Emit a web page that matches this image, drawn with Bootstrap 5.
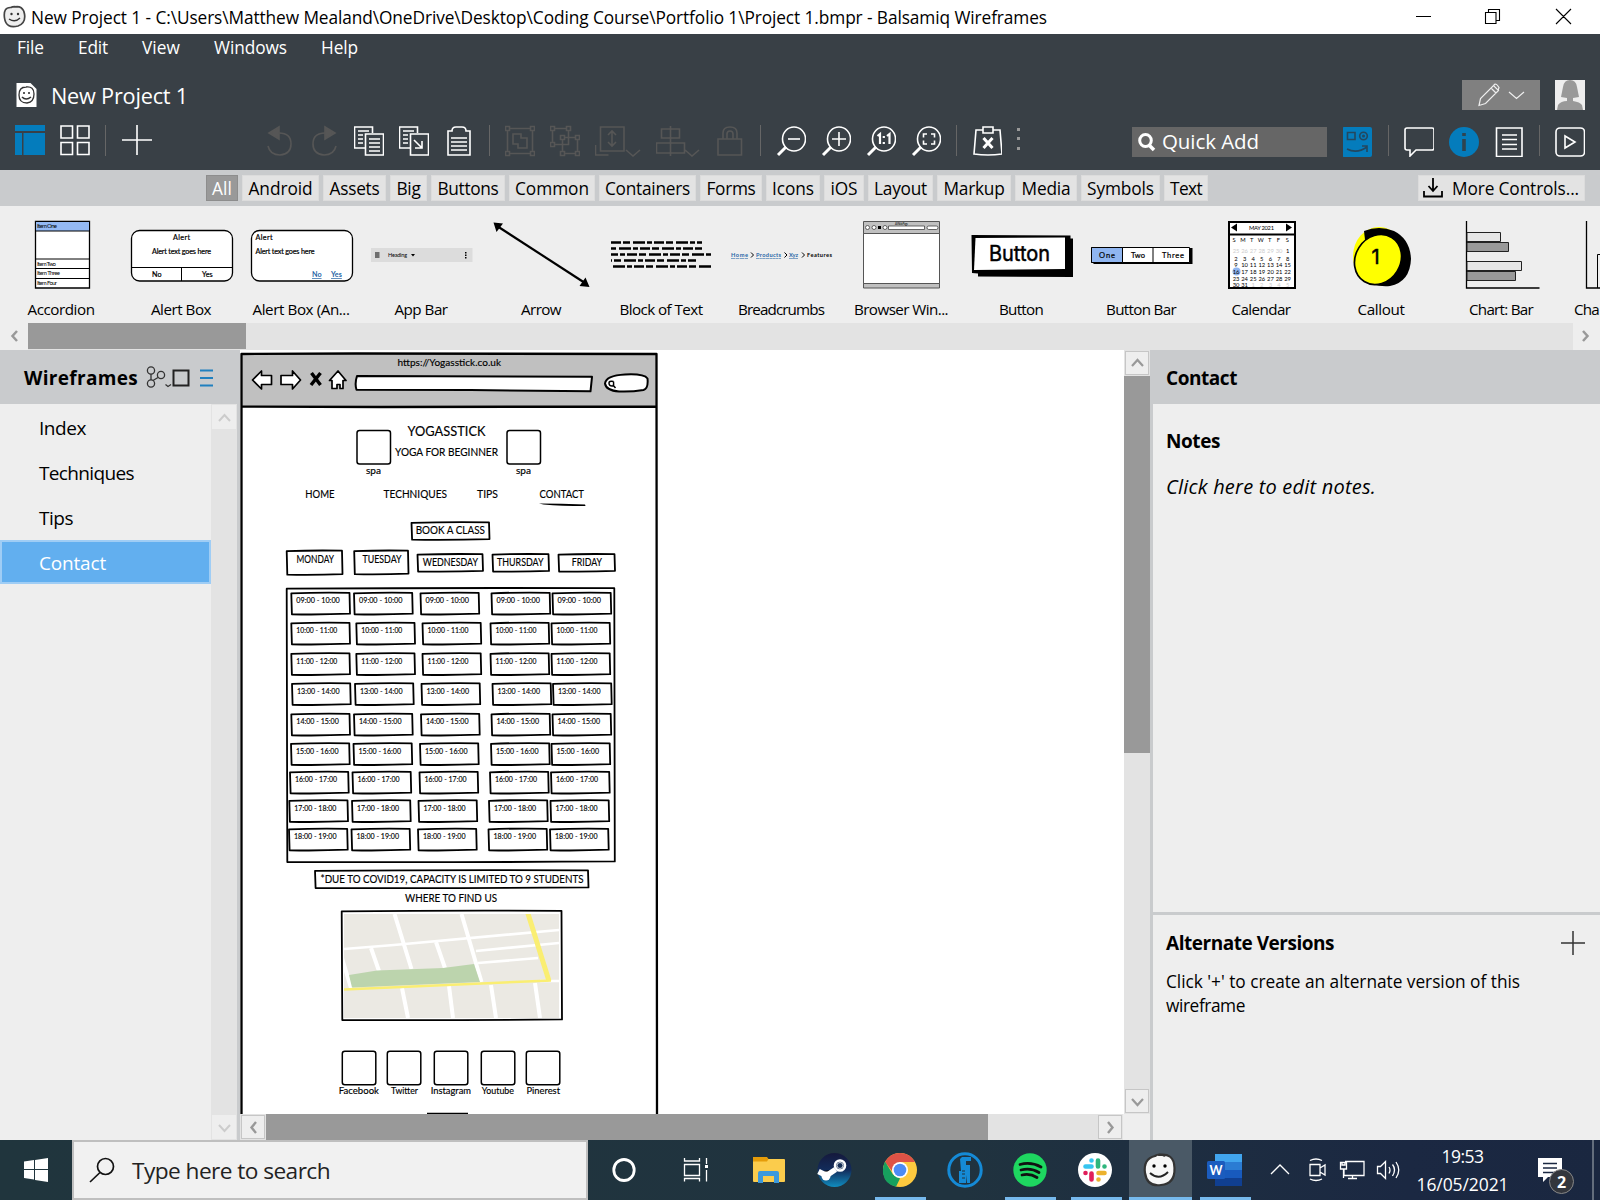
<!DOCTYPE html>
<html lang="en">
<head>
<meta charset="utf-8">
<title>New Project 1 - Balsamiq Wireframes</title>
<link href="https://cdn.jsdelivr.net/npm/bootstrap@5.3.0/dist/css/bootstrap.min.css" rel="stylesheet">
<style>
body{width:1600px;height:1200px;overflow:hidden;font-family:"Open Sans","Noto Sans",sans-serif;font-size:17.3px;line-height:24px;color:#000;background:#eee}
svg{display:block;flex:none}
[data-w]{white-space:nowrap;display:inline-block}
.titlebar{height:34px;background:#fff;padding-left:2px}
.titletext{margin-left:5px;padding-top:1px}
.apphead{height:136px;background:#394046;color:#fff}
.menurow{height:31px;padding:0 0 3px 17px}
.menurow span{margin-right:34px}
.projrow{height:60px;padding:0 15px}
.projname{font-size:21.7px;margin-left:14px;padding-top:2px}
.modebox{width:78px;height:30px;background:#808080;margin-right:15px}
.toolrow{height:45px;padding:0 15px;gap:15px}
.toolrow svg{fill:none;stroke:#fff;stroke-width:1.6}
.toolrow svg.off{stroke:#565656}
.vsep{width:1px;height:31px;background:#666;flex:none}
.quick{width:195px;height:30px;margin:2px 1px 0 0;background:#666;font-size:20.5px;line-height:29px}
.catbar{height:36px;background:#c9cbcd;padding:5px 15px 4px 206px}
.cat{height:26px;line-height:25px;background:#e3e3e3;border:1px solid #dcdcdc;text-align:center;flex:none;overflow:hidden}
.cat.on{background:#999;border-color:#8d8d8d;color:#fff}
.lib{height:117px;background:#eee;padding-left:1px;overflow:hidden}
.lib>div{width:120px;flex:none;text-align:center;font-size:15.2px;line-height:20px}
.lib>div:last-child{width:39px;text-align:left;overflow:hidden}
.lib svg{height:87px;width:120px;margin-bottom:6px}
.lib>div:last-child span{margin-left:13px}
.ink{fill:none;stroke:#000}
.hbar{height:27px;background:#e3e3e3}
.panehead{height:54px;background:#c9cbcd;font-weight:700;font-size:19px;padding-top:2px}
.work{height:790px}
.leftpane{width:240px;border-right:3px solid #c9cbcd;background:#eee}
.pages{width:211px;padding-top:1px;font-size:19px}
.pages div{height:45px;line-height:46px;padding-left:39px}
.pages .sel{background:#62afef;border:2px solid #9fcdf5;color:#fff;padding-left:37px;height:44px;line-height:42px;width:211px}
.sbar{width:26px;background:#e3e3e3}
.sbtn{background:#eee;border:1px solid #c6c6c6;width:24px;height:24px;margin:1px;flex:none}
.sbtn.flat{border-color:#eee}
.thumb{background:#999}
.canvas{width:884px;background:#fff}
.rightpane{width:450px;border-left:3px solid #c9cbcd}
.rightpane b{font-size:19px;font-weight:700}
.notes{height:508px;padding:25px 13px}
.notes div{margin-top:21px;font-size:20px}
.alts{border-top:3px solid #c9cbcd;padding:16px 14px 0 13px}
.taskbar{height:60px;background:linear-gradient(90deg,#20353d,#20333f 60%,#1b2842 88%,#1a2740);color:#fff}
.searchbox{width:516px;height:60px;border:2px solid #bfbfbf;background:#f1f1f1;color:#222;font-size:22.7px;line-height:57px}
.app{height:60px;position:relative}
.app.run::after{content:"";position:absolute;left:50%;bottom:0;width:51px;margin-left:-25.5px;height:3px;background:#76b9ed}
.app.cur{background:#4a5966}
.app.cur::after{width:63px;margin-left:-31.5px}
.clock{width:105px;font-size:17.5px;line-height:28px;text-align:center;padding-top:2px}
text{font-family:"Lato","Open Sans",sans-serif}
</style>
</head>
<body class="d-flex flex-column m-0">
<div class="titlebar d-flex align-items-center">
 <svg width="24" height="26" viewBox="1 4 24 26"><path d="M13 7Q22 5 23.500 14T17 26Q5 29 3.500 18T10 7.500Q12 6 17 7" fill="#eee" stroke="#444" stroke-width="1.700"/><g fill="#333"><circle cx="10.500" cy="14" r="1.200"/><circle cx="17" cy="14" r="1.200"/></g><path d="M8 19q6 4 11-1" fill="none" stroke="#333" stroke-width="1.400"/></svg>
 <span class="titletext" data-w="1016">New Project 1 - C:\Users\Matthew Mealand\OneDrive\Desktop\Coding Course\Portfolio 1\Project 1.bmpr - Balsamiq Wireframes</span>
 <svg class="ms-auto" width="190" height="34" viewBox="1410 0 190 34" fill="none" stroke="#000" stroke-width="1.100"><path d="M1416 16.500h15M1485.500 12.500h10.500v11h-10.500zM1488.500 12.500v-3h11v11h-3M1556 9l15 15M1571 9l-15 15"/></svg>
</div>
<header class="apphead">
 <nav class="menurow d-flex align-items-center"><span data-w="27">File</span><span data-w="30">Edit</span><span data-w="38">View</span><span data-w="73">Windows</span><span data-w="37">Help</span></nav>
 <div class="projrow d-flex align-items-center">
  <svg width="22" height="26" viewBox="15 82 22 26"><path d="M16.500 83h14l6 6v18h-20z" fill="#fff"/><path d="M26 87q8-1 8 7t-7 9q-8 0-8-8t7-8" fill="none" stroke="#333" stroke-width="1.300"/><path d="M22 97q4 4 9 0M24 92v2M29 92v2" stroke="#333" stroke-width="1.600" fill="none"/></svg>
  <span class="projname" data-w="137">New Project 1</span>
  <div class="modebox ms-auto"><svg width="78" height="30" viewBox="1462 80 78 30" fill="none" stroke="#eee" stroke-width="1.200"><path d="M1479 105.500l1.500-7 13-13 5 5-13 13zM1491 88l5 5M1493.500 85.500l1.500-1.500q2 0 4 3.500l-1 3M1509 92l7.500 6.500 7.500-6.500"/></svg></div>
  <svg width="30" height="30" viewBox="0 0 30 30"><path fill="#eee" d="M0 0h30v30H0z"/><path fill="#999" d="M15 0q6 0 7 7l2 10-6 1v3q7 1 9 4l1 5H2l1-5q3-4 9-4v-3l-6-1 2-10Q9 0 15 0"/></svg>
 </div>
 <div class="toolrow d-flex">
  <svg width="30" height="32" viewBox="15 125 30 32"><path fill="#047cbc" stroke="none" d="M15 125h30v6H15zM15 133h7v22h-7zM23.500 133H45v22H23.500z"/></svg>
  <svg width="30" height="32" viewBox="60 125 30 32"><path d="M61 126h11.500v12H61zM77.500 126H89v12H77.500zM61 142.500h11.500v12H61zM77.500 142.500H89v12H77.500z"/></svg>
  <div class="vsep"></div>
  <svg width="31" height="32" viewBox="120 125 31 32"><path d="M121 140h30M136 125v30"/></svg>
  <svg class="off" style="margin-left:97px" width="30" height="32" viewBox="264 125 30 32"><path d="M268 146q2 9 12 9 11-1 11-11 0-11-12-11"/><path fill="#565656" d="M279 127v12l-10-6z"/></svg>
  <svg class="off" width="30" height="32" viewBox="308 125 30 32"><path d="M335 146q-2 9-12 9-11-1-11-11 0-11 12-11"/><path fill="#565656" d="M324 127v12l10-6z"/></svg>
  <svg width="30" height="32" viewBox="354 125 30 32"><path d="M365 148h-10.500v-21h18v6M365.500 134h18v21h-18zM358 131h11M358 135h5M358 139h5M358 143h5M369 139h11M369 143h11M369 147h11M369 151h11"/></svg>
  <svg width="30" height="32" viewBox="399 125 30 32"><path d="M410 148h-10.500v-21h18v6M410.500 134h18v21h-18zM403 131h11M403 135h5M403 139h5M403 143h5M414 140l8 8M422 141v7h-7"/></svg>
  <svg width="30" height="32" viewBox="444 125 30 32"><path d="M448 131h4q0-4 4-4h6q4 0 4 4h4v24h-22zM451 138h16M451 142h16M451 146h16M451 150h16"/></svg>
  <div class="vsep"></div>
  <svg class="off" width="30" height="32" viewBox="505 125 30 32"><path d="M507.500 128.500h25v25h-25zM513 134h8v4h6v10h-9v-4h-5z"/><path fill="#394046" d="M505.500 126.500h4v4h-4zM530.500 126.500h4v4h-4zM505.500 151.500h4v4h-4zM530.500 151.500h4v4h-4z"/></svg>
  <svg class="off" width="30" height="32" viewBox="550 125 30 32"><path d="M552.500 128.500h16v16h-16zM562.500 137.500h15v16h-15z"/><path fill="#394046" d="M550.500 126.500h4v4h-4zM566.500 126.500h4v4h-4zM550.500 142.500h4v4h-4zM575.500 135.500h4v4h-4zM560.500 151.500h4v4h-4zM575.500 151.500h4v4h-4zM560.500 135.500h4v4h-4z"/></svg>
  <svg class="off" width="46" height="32" viewBox="595 125 46 32"><path d="M600.500 127h23.500v24h-23.500zM595.500 145v10h13M612 131v15M608 135l4-4 4 4M608 142l4 4 4-4M626 150l7 6 7-6"/></svg>
  <svg class="off" width="46" height="32" viewBox="656 125 46 32"><path d="M661.500 129h18v9h-18zM656.500 143h28v10h-28zM670.500 126v30M685 150l7 6 7-6"/></svg>
  <svg class="off" width="28" height="32" viewBox="717 125 28 32"><path d="M718 139h23.500v16H718zM723 139v-6q0-6 7-6t7 6v6M727 139v-5q0-3 3-3t3 3v5z"/></svg>
  <div class="vsep"></div>
  <svg width="30" height="32" viewBox="777 125 30 32"><ellipse cx="795" cy="139" rx="11.500" ry="12"/><path d="M789 139h12"/><path stroke-width="3" d="M787 147l-8 8"/></svg>
  <svg width="30" height="32" viewBox="822 125 30 32"><ellipse cx="840" cy="139" rx="11.500" ry="12"/><path d="M833 139h14M840 132v14"/><path stroke-width="3" d="M832 147l-8 8"/></svg>
  <svg width="30" height="32" viewBox="867 125 30 32"><ellipse cx="885" cy="139" rx="11.500" ry="12"/><path stroke-width="2.200" d="M878.500 136l2.500-2v10M888 136l2.500-2v10M884.800 136v2M884.800 142v2"/><path stroke-width="3" d="M877 147l-8 8"/></svg>
  <svg width="30" height="32" viewBox="912 125 30 32"><ellipse cx="930" cy="139" rx="11.500" ry="12"/><path d="M928 134h-3.500v3.500M932 134h3.500v3.500M928 144h-3.500v-3.500M932 144h3.500v-3.500"/><path stroke-width="3" d="M922 147l-8 8"/></svg>
  <div class="vsep"></div>
  <svg width="30" height="32" viewBox="972 125 30 32"><path d="M983 130h-7l-2 24q14 2 28 0l-2-24h-7M983 127h10v6h-10z"/><path stroke-width="3" d="M983.500 138l9 10M992.500 138l-9 10"/></svg>
  <svg width="4" height="32" viewBox="1016 125 4 32"><path fill="#999" stroke="none" d="M1016 128h3v3h-3zM1016 137h3v3h-3zM1016 147h3v3h-3z"/></svg>
  <div class="quick d-flex ms-auto"><svg width="30" height="30" viewBox="1132 127 30 30"><ellipse cx="1145.500" cy="140.500" rx="5.800" ry="6" stroke-width="3"/><path stroke-width="3.600" d="M1149 145l5 5"/></svg><span data-w="97">Quick Add</span></div>
  <svg width="30" height="32" viewBox="1343 125 30 32"><rect x="1342" y="127" width="30" height="30" rx="2" fill="#047cbc" stroke="none"/><path stroke="#24475e" d="M1347.500 132.500h7.500v7h-7.500zM1347 149q10 5 20-2M1362 146h5v6"/><circle stroke="#24475e" cx="1363.500" cy="136" r="3.800"/><circle fill="#24475e" stroke="none" cx="1363.500" cy="136" r="1.500"/></svg>
  <div class="vsep"></div>
  <svg width="30" height="32" viewBox="1403 125 30 32"><path d="M1406 128h25q2 0 2 2v18q0 2-2 2h-16l-6 6v-6h-3q-2 0-2-2v-18q0-2 2-2z"/></svg>
  <svg width="30" height="32" viewBox="1448 125 30 32"><circle cx="1463" cy="142" r="15" fill="#047cbc" stroke="none"/><path d="M1463 133v3M1463 139v12" stroke="#2f4450" stroke-width="3.600"/></svg>
  <svg width="30" height="32" viewBox="1494 125 30 32"><path d="M1496.500 128h25.500v28.500h-25.500zM1502 135h15M1502 139.500h15M1502 144.500h15M1502 149h15"/></svg>
  <div class="vsep"></div>
  <svg width="30" height="32" viewBox="1555 125 30 32"><rect x="1556" y="128" width="28.500" height="28" rx="4"/><path d="M1565 136v12l10-6z"/></svg>
 </div>
</header>
<div class="catbar d-flex"><div id="cats" class="d-flex gap-1"></div>
 <div class="cat ms-auto d-flex" style="width:167px"><svg width="33" height="24" viewBox="1419 176 33 24" fill="none" stroke="#000" stroke-width="1.800"><path d="M1424 191v5.500h18V191"/><path d="M1433 178v12M1428.500 186l4.500 5 4.500-5"/></svg><span data-w="127">More Controls...</span></div>
</div>
<div class="lib d-flex">
 <div><svg viewBox="1 206 120 87"><path fill="#fff" stroke="#000" stroke-width="1.300" d="M35.500 221.500h54v66.500h-54z"/><path fill="#94b9f3" stroke="#000" d="M35.500 221.500h54v9.500h-54z"/><path class="ink" d="M35.500 259h54M35.500 268.500h54M35.500 278.500h54"/><g font-size="6"><text x="37" y="228" textLength="20">Item One</text><text x="37" y="265.500" textLength="19">Item Two</text><text x="37" y="275" textLength="23">Item Three</text><text x="37" y="285" textLength="20">Item Four</text></g></svg><span data-w="67">Accordion</span></div>
 <div><svg viewBox="121 206 120 87"><rect x="131.500" y="230.500" width="101" height="50.500" rx="8" fill="#fff" stroke="#000" stroke-width="1.300"/><path class="ink" d="M131.500 267.500h101M181.500 267.500v13.500"/><g font-size="7.200" stroke="#000" stroke-width=".2"><text x="173" y="240" textLength="17">Alert</text><text x="152" y="254" textLength="59">Alert text goes here</text><text x="152" y="277">No</text><text x="202" y="277">Yes</text></g></svg><span data-w="60">Alert Box</span></div>
 <div><svg viewBox="241 206 120 87"><rect x="251.500" y="230.500" width="101" height="50.500" rx="8" fill="#fff" stroke="#000" stroke-width="1.300"/><g font-size="7.200"><g stroke="#000" stroke-width=".2"><text x="255.500" y="240" textLength="17">Alert</text><text x="255.500" y="254" textLength="59">Alert text goes here</text></g><g fill="#2866a6" text-decoration="underline" font-weight="700"><text x="312" y="277">No</text><text x="331" y="277">Yes</text></g></g></svg><span data-w="97">Alert Box (An...</span></div>
 <div><svg viewBox="361 206 120 87"><path fill="#dcdcdc" d="M371 248h101.500v14H371z"/><path class="ink" d="M375 253h4.500M375 255h4.500M375 257h4.500"/><path d="M411 254h4l-2 2.500zM465 252h1.500v1.500h-1.500zM465 254.500h1.500v1.500h-1.500zM465 257h1.500v1.500h-1.500z"/><text x="388" y="257" font-size="5.500" textLength="19">Heading</text></svg><span data-w="53">App Bar</span></div>
 <div><svg viewBox="481 206 120 87"><path class="ink" stroke-width="2.200" d="M497 226l88 57"/><path d="M493.500 222.500l9.500 1-6.500 8.500zM589.500 287l-10-1 6-8.500z"/></svg><span data-w="40">Arrow</span></div>
 <div><svg viewBox="601 206 120 87"><g class="ink" stroke-width="2.600" stroke-dasharray="10 2 7 3 12 2 5 2"><path d="M611 242.500h91"/><path d="M611 248.500h93" stroke-dashoffset="14"/><path d="M611 254.500h100" stroke-dashoffset="27"/><path d="M611 260.500h85" stroke-dashoffset="9"/><path d="M611 266.500h100" stroke-dashoffset="20"/></g></svg><span data-w="83">Block of Text</span></div>
 <div><svg viewBox="721 206 120 87"><g font-size="5.700" font-weight="700"><g fill="#2866a6" text-decoration="underline"><text x="731" y="257" textLength="17">Home</text><text x="756" y="257" textLength="25">Products</text><text x="789" y="257" textLength="9">Xyz</text></g><text x="807" y="257" textLength="25">Features</text></g><path class="ink" d="M751 252.500l2.500 2.500-2.500 2.500M784.500 252.500l2.500 2.500-2.500 2.500M802 252.500l2.500 2.500-2.500 2.500"/></svg><span data-w="86">Breadcrumbs</span></div>
 <div><svg viewBox="841 206 120 87"><path fill="#c0c0c0" stroke="#555" d="M863.500 221.500h76v66.500h-76z"/><path fill="#fff" stroke="#555" d="M863.500 233.500h76v50h-76z"/><g fill="#fff" stroke="#444" stroke-width=".8"><circle cx="867.500" cy="227.500" r="2"/><circle cx="874" cy="227.500" r="2"/><circle cx="885" cy="227.500" r="2"/><path d="M888.500 226h36v3.500h-36z"/><rect x="927" y="226" width="11" height="3.500" rx="1.700"/></g><path d="M878 226h3v3h-3z"/><text x="895" y="225" font-size="3" textLength="13">A Web Page</text></svg><span data-w="94">Browser Win...</span></div>
 <div><svg viewBox="961 206 120 87"><path d="M971.500 235l99 .5v3h2.500V277l-95-.5v-3l-6-.5z"/><path fill="#fff" d="M975.500 238l89.500-.5v31.500l-91 1z"/><text x="989" y="261" font-size="21.500" textLength="61" lengthAdjust="spacingAndGlyphs" stroke="#000" stroke-width=".5" style="font-family:Inter">Button</text></svg><span data-w="44">Button</span></div>
 <div><svg viewBox="1081 206 120 87"><path d="M1092 248h100.500v16h-99z"/><path fill="#fff" stroke="#000" d="M1091.500 247.500h98v15h-98z"/><path fill="#8fb5f0" stroke="#000" d="M1091.500 247.500h31v15h-31z"/><path class="ink" d="M1153 247.500v15"/><g font-size="7.500" stroke="#000" stroke-width=".2"><text x="1099" y="257.500" textLength="16">One</text><text x="1131" y="257.500" textLength="14">Two</text><text x="1162" y="257.500" textLength="22">Three</text></g></svg><span data-w="70">Button Bar</span></div>
 <div><svg viewBox="1201 206 120 87"><path fill="#fff" stroke="#000" stroke-width="2" d="M1229 222h66v66h-66z"/><path class="ink" stroke-width="2" d="M1229 234.500h66"/><path d="M1231 227.500l6-4v8zM1292 227.500l-6-4v8z"/><circle cx="1236.500" cy="271.500" r="4" fill="#8fb5f0"/><g id="cal" font-size="5.800"><text x="1249" y="230" textLength="25">MAY 2021</text></g></svg><span data-w="59">Calendar</span></div>
 <div><svg viewBox="1321 206 120 87"><ellipse cx="1379" cy="256" rx="26" ry="29" fill="#ff0"/><path d="M1364 231q15-6 30 0 16 8 17 28-1 23-21 27-8 1-20-2z"/><ellipse cx="1378" cy="259.500" rx="22.500" ry="26" transform="rotate(32 1378 259.500)" fill="#ff0" stroke="#000" stroke-width="1.700"/><text x="1371.500" y="264" font-size="20" stroke="#000" stroke-width=".5" style="font-family:Inter">1</text></svg><span data-w="47">Callout</span></div>
 <div><svg viewBox="1441 206 120 87"><path class="ink" stroke-width="1.300" d="M1466.500 221v67h73"/><g stroke="#222"><path fill="#e6e6e6" d="M1467 232.500h33.500v9H1467zM1467 261.500h54.500v9H1467z"/><path fill="#999" d="M1467 242.500h41.500v9H1467zM1467 271.500h48.500v9H1467z"/></g></svg><span data-w="64">Chart: Bar</span></div>
 <div><svg viewBox="1561 206 120 87"><path class="ink" stroke-width="1.300" d="M1586.500 221v67h73"/><path class="ink" d="M1597.500 288v-33.500h9"/></svg><span data-w="25">Cha</span></div>
</div>
<div class="hbar d-flex">
 <svg width="28" height="27" viewBox="0 323 28 27"><path fill="#eee" d="M0 323h28v27H0z"/><path d="M17 331l-4.500 5 4.500 5" fill="none" stroke="#999" stroke-width="2.500"/></svg>
 <div class="thumb" style="width:218px;height:26px"></div>
 <svg class="ms-auto" width="27" height="27" viewBox="1573 323 27 27"><path fill="#eee" d="M1573 323h27v27h-27z"/><path d="M1583 331l4.500 5-4.500 5" fill="none" stroke="#999" stroke-width="2.500"/></svg>
</div>
<main class="work d-flex">
 <aside class="leftpane d-flex flex-column">
  <div class="panehead d-flex align-items-center" style="padding-left:24px"><span data-w="114">Wireframes</span>
   <svg width="80" height="30" viewBox="138 363 80 30" fill="none" stroke="#333" stroke-width="1.300"><circle cx="151" cy="370.500" r="3.600"/><circle cx="161" cy="375" r="3.600"/><circle cx="151" cy="383.500" r="3.600"/><path d="M151 374v6M153 380.500l5-3M165.500 384.500l2.500 2 3-2"/><path stroke="#222" stroke-width="2" d="M173.500 370.500h15v15h-15z"/><path stroke="#2080bf" stroke-width="1.800" d="M200 370.500h13M200 378h13M200 385.500h13"/></svg></div>
  <div class="d-flex flex-fill"><div class="pages"><div><span data-w="47">Index</span></div><div><span data-w="95">Techniques</span></div><div><span data-w="34">Tips</span></div><div class="sel"><span data-w="67">Contact</span></div></div>
   <div class="sbar d-flex flex-column justify-content-between"><div class="sbtn flat"><svg width="22" height="22" fill="none" stroke="#ccc" stroke-width="2"><path d="M6 15l5.500-6 5.500 6"/></svg></div><div class="sbtn flat"><svg width="22" height="22" fill="none" stroke="#ccc" stroke-width="2"><path d="M6 9l5.500 6L17 9"/></svg></div></div></div>
 </aside>
 <div class="d-flex flex-column">
  <div class="d-flex">
  <section class="canvas">
   <svg id="board" width="884" height="764" viewBox="240 350 884 764" stroke-linejoin="round">
    <clipPath id="mapclip"><path d="M344 914h215v104H344z"/></clipPath>
    <path fill="#c0c0c0" d="M242 354h415v53H242z"/>
    <g class="ink" stroke-width="2.300"><path d="M241.500 1120V354l115-.5 300 .5.500 766M241 406.500l140 .5 276-.5"/></g>
    <g fill="#fff" stroke="#000" stroke-width="1.700"><path d="M252.500 380l9-9v4.500h10v9h-10v4.500zM300.500 380l-8-9v4.500h-11.500v9h11.500v4.500zM329.500 380.500l8.500-9.500 8 9.500h-3v8h-3v-4h-3v4h-5v-8z"/>
     <path stroke-width="2" d="M357 376l235 .8-1.500 14.500-120-1.200-114-.4q-2-6 .5-13.700zM605 383.500q1-8 20-9t22.500 4q1 10-4 11.500-12 2-24.500 1.500-13-1-14-8z"/></g>
    <path class="ink" stroke-width="3.400" d="M311.500 373l9 12M320.500 373l-9.500 12"/>
    <path class="ink" stroke-width="1.500" d="M613.500 381.500q-5-1-4.500 2t4 2.500q1-1 .5-4.500M613 385l2.500 3"/>
    <g id="sketch" fill="#fff" stroke="#000"></g>
    <g id="labels" stroke="#000" stroke-width=".15"></g>
    <path d="M539 503.500q22 0 46 1l.5 1.500q-24 0-42-1.500z"/>
    <g clip-path="url(#mapclip)">
    <path fill="#ebe9e3" d="M344 914h215v104H344z"/>
    <g fill="none" stroke="#fff" stroke-width="4"><path stroke-width="2.700" d="M344 949l50-4 165-15M476 951l83-8M478 963l60-5M540 981h19"/><path d="M394.500 914l17 55M461.500 914l20 68M371 948l8 23M436 942l9 26M342 958l9 30M402 988l6 30M449 986l4 32M491 985l5 33M535 983l5 35"/></g>
    <path fill="#bcd4ad" d="M349 975l28-4.500 66-2.500 31-4 6 18-128 5.500z"/>
    <path fill="none" stroke="#faee72" stroke-width="2.500" d="M344 989.500l207-9"/><path fill="none" stroke="#faee72" stroke-width="5" d="M527.500 912l21.500 69"/>
    </g>
    <path class="ink" stroke-width="1.500" d="M427 1113.500h41"/>
   </svg>
  </section>
  <div class="sbar d-flex flex-column"><div class="sbtn"><svg width="22" height="22" fill="none" stroke="#999" stroke-width="2.200"><path d="M6 14l5.500-6 5.500 6"/></svg></div><div class="thumb" style="height:377px"></div><div class="sbtn mt-auto"><svg width="22" height="22" fill="none" stroke="#999" stroke-width="2.200"><path d="M6 9l5.500 6L17 9"/></svg></div></div>
  </div>
  <div class="d-flex sbar" style="width:910px;height:26px"><div class="sbtn"><svg width="22" height="22" fill="none" stroke="#999" stroke-width="2.400"><path d="M14 6l-4.500 5.500L14 17"/></svg></div><div class="thumb" style="width:722px"></div><div class="sbtn" style="margin-left:110px"><svg width="22" height="22" fill="none" stroke="#999" stroke-width="2.400"><path d="M9 6l4.500 5.500L9 17"/></svg></div><div class="flex-fill" style="background:#eee"></div></div>
 </div>
 <aside class="rightpane">
  <div class="panehead d-flex align-items-center" style="padding-left:13px"><span data-w="71">Contact</span></div>
  <div class="notes"><b data-w="54">Notes</b><div><i data-w="210">Click here to edit notes.</i></div></div>
  <div class="alts"><div class="d-flex justify-content-between"><b data-w="168">Alternate Versions</b><svg width="25" height="26" viewBox="1561 930 25 26"><path fill="none" stroke="#333" stroke-width="1.500" d="M1561 942h24M1573 930v24"/></svg></div>
   <div style="margin-top:13px"><span data-w="354">Click '+' to create an alternate version of this</span><br><span data-w="79">wireframe</span></div></div>
 </aside>
</main>
<footer class="taskbar d-flex">
 <svg width="72" height="60" viewBox="0 1140 72 60"><path fill="#fff" d="M24 1161.500l10-1.500v9H24zM35 1160l13-2v11H35zM24 1170h10v9.500l-10-1.500zM35 1170h13v12l-13-2z"/></svg>
 <div class="searchbox d-flex"><svg width="58" height="56" viewBox="74 1142 58 56"><circle cx="105.500" cy="1166.500" r="8" fill="none" stroke="#111" stroke-width="1.700"/><path d="M100 1172.500l-10 9.500" stroke="#111" stroke-width="1.700"/></svg><span data-w="198">Type here to search</span></div>
 <div class="app" style="margin-left:3px"><svg width="65" height="60" viewBox="591 1140 65 60"><ellipse cx="624" cy="1170" rx="10.200" ry="10.500" fill="none" stroke="#fff" stroke-width="2.800"/></svg></div>
 <div class="app"><svg width="78" height="60" viewBox="656 1140 78 60"><path fill="none" stroke="#fff" stroke-width="1.300" d="M684.500 1164.500h15v11h-15zM684.500 1158v3h15v-3M684.500 1181.500v-3h15v3M706.500 1158v6M706.500 1170v11.500"/><path fill="#fff" d="M705 1165h3v3h-3z"/></svg></div>
 <div class="app"><svg width="70" height="60" viewBox="734 1140 70 60"><rect x="753" y="1159" width="32" height="23" rx="1" fill="#fbcc4c"/><path fill="#e59c09" d="M753 1157h14l1.500 2-1.500 2.500h-14z"/><path fill="#3c99dc" d="M758 1183v-10q0-2 2-2h17q2 0 2 2v10h-5v-7h-11v7z"/></svg></div>
 <div class="app"><svg width="63" height="60" viewBox="804 1140 63 60"><defs><linearGradient id="steam" x2="0" y2="1"><stop stop-color="#15193c"/><stop offset=".5" stop-color="#122c5b"/><stop offset="1" stop-color="#108dc0"/></linearGradient></defs><circle cx="834.500" cy="1170" r="17" fill="url(#steam)"/><path stroke="#fff" stroke-width="5.500" d="M818.500 1171.500l8 4 9-6"/><circle cx="826" cy="1176" r="4.500" fill="#fff"/><circle cx="840" cy="1165.500" r="5" fill="#173057" stroke="#fff" stroke-width="2.600"/><circle cx="840" cy="1165.500" r="3" fill="none" stroke="#fff" stroke-width=".8"/></svg></div>
 <div class="app run"><svg width="66" height="60" viewBox="867 1140 66 60"><circle cx="900" cy="1170" r="17" fill="#fdc93f"/><path fill="#de5246" d="M885 1162q5-9 15-9t15 9H900l-8 9z"/><path fill="#17a05e" d="M885 1161.500l8 13 7 4-4 8.200q-11-2-13-13.200-.5-7 2-12z"/><circle cx="900" cy="1170" r="8" fill="#fff"/><circle cx="900" cy="1170" r="6.300" fill="#4c8bf5"/></svg></div>
 <div class="app"><svg width="64" height="60" viewBox="933 1140 64 60"><circle cx="965" cy="1170" r="16.200" fill="none" stroke="#158ad6" stroke-width="3"/><path fill="#158ad6" d="M960 1159l2-2h9v4h-5v4h4v18h-3v-8l-1 8h-7v-12h2z"/><path stroke="#20333f" stroke-width="1" d="M962 1171h3M962 1174h3M962 1178h3"/></svg></div>
 <div class="app run"><svg width="67" height="60" viewBox="997 1140 67 60"><circle cx="1030" cy="1170" r="16.700" fill="#1ed760"/><path fill="none" stroke="#111" stroke-linecap="round" stroke-width="2.800" d="M1020 1164.500q11-3 21 2.500M1021 1170q10-2.500 18 2.500M1022 1175q8-2 15 2.500"/></svg></div>
 <div class="app run"><svg width="65" height="60" viewBox="1064 1140 65 60"><circle cx="1095" cy="1170" r="17" fill="#fff"/><g stroke-width="4.600" stroke-linecap="round"><path stroke="#36c5f0" d="M1085.500 1166.500h6M1091.500 1160.500v0"/><path stroke="#2eb67d" d="M1098 1160.500v6M1104.500 1166.500v0"/><path stroke="#ecb22e" d="M1098.500 1173h6M1098.500 1179.500v0"/><path stroke="#e01e5a" d="M1091.500 1173.500v6M1085.500 1173v0"/></g></svg></div>
 <div class="app cur run"><svg width="63" height="60" viewBox="1129 1140 63 60"><path d="M1158 1155q16-3 16.500 13T1161 1185q-14 2-16-12T1155 1156q4-3 10 0" fill="#f7f7f7" stroke="#333" stroke-width="2.200"/><circle cx="1154" cy="1166" r="1.700"/><circle cx="1165" cy="1166" r="1.700"/><path d="M1150 1173q9 8 18-1" fill="none" stroke="#222" stroke-width="2"/></svg></div>
 <div class="app run"><svg width="66" height="60" viewBox="1192 1140 66 60"><path fill="#41a5ee" d="M1215 1154h27v8h-27z"/><path fill="#2b7cd3" d="M1215 1162h27v8h-27z"/><path fill="#185abd" d="M1215 1170h27v8h-27z"/><path fill="#103f91" d="M1215 1178h27v8h-27z"/><rect x="1207" y="1161" width="18" height="18" rx="1.500" fill="#1b5cbe"/><text x="1209.500" y="1174.500" fill="#fff" font-size="13" font-weight="700" textLength="13" lengthAdjust="spacingAndGlyphs">W</text></svg></div>
 <svg width="152" height="60" viewBox="1258 1140 152 60" fill="none" stroke="#fff" stroke-width="1.300"><path d="M1271 1174l9-9 9 9M1310 1164.500h10v11h-10zM1320 1168l5-3v10l-5-3M1310 1160.500q6-3 12 0M1310 1179q6 3 12 0M1345 1161.500h19v14h-20v-7M1340.500 1162.500h6v6.500h-6zM1342 1162v3h3v-3M1343.500 1169v9M1348 1178.500h9M1352.500 1175.500v3M1377.500 1166.500h3l5-5v17l-5-5h-3zM1389 1167q2 3 0 6.500M1392.500 1164.500q4 5 0 11.500M1396 1162q5.500 8 0 16"/></svg>
 <div class="clock"><span data-w="42">19:53</span><br><span data-w="92">16/05/2021</span></div>
 <svg width="85" height="60" viewBox="1515 1140 85 60"><path fill="#fff" d="M1538 1158h24v19h-14l-5 5v-5h-5z"/><path stroke="#1b2842" stroke-width="1.300" d="M1543 1163.500h14M1543 1168h14M1543 1172.500h14"/><circle cx="1561.500" cy="1181.500" r="12" fill="#33363d" stroke="#888"/><text x="1561.500" y="1187.500" fill="#fff" font-size="16" font-weight="700" text-anchor="middle" style="font-family:'Open Sans'">2</text><path stroke="#76808c" stroke-width="1.600" d="M1593 1140v60"/></svg>
</footer>
<script src="https://cdn.jsdelivr.net/npm/bootstrap@5.3.0/dist/js/bootstrap.bundle.min.js"></script>
<script>
const NS='http://www.w3.org/2000/svg';
function add(parent,tag,attrs,txt){const e=document.createElementNS(NS,tag);for(const k in attrs)e.setAttribute(k,attrs[k]);if(txt)e.textContent=txt;parent.appendChild(e);return e}

// category filter buttons: label, box width, text width
[['All',32,20],['Android',77,64],['Assets',63,50],['Big',37,24],['Buttons',74,61],['Common',86,74],['Containers',97,85],['Forms',62,49],['Icons',54,42],['iOS',40,27],['Layout',65,53],['Markup',74,61],['Media',62,49],['Symbols',79,67],['Text',44,32]].forEach(([n,w,t],i)=>{
 const d=document.createElement('div');d.className='cat'+(i?'':' on');d.style.width=w+'px';
 d.innerHTML='<span data-w="'+t+'">'+n+'</span>';document.getElementById('cats').appendChild(d)});

// calendar thumbnail
const cal=document.getElementById('cal');
['S','M','T','W','T','F','S'].forEach((d,i)=>add(cal,'text',{x:1234+i*8.9,y:242,'text-anchor':'middle'},d));
for(let i=0;i<42;i++){const n=i<6?25+i:(i-5>31?i-36:i-5),out=i<6||i>36,r=Math.floor(i/7);
 add(cal,'text',{x:1236+(i%7)*8.6,y:[253,260.5,267.2,274,281,287][r],'text-anchor':'middle',fill:out?'#ccc':'#000'},String(n))}

// hand-drawn boxes
const sk=document.getElementById('sketch'),lb=document.getElementById('labels');
function box(x0,y0,x1,y1,w=1.8){const m=(x0+x1)/2;
 add(sk,'path',{'stroke-width':w,d:`M${x0} ${y0+.5}Q${m} ${y0-.6} ${x1-.5} ${y0}L${x1} ${y1-.6}Q${m} ${y1+.6} ${x0+.6} ${y1}Z`})}
function label(t,x0,x1,y,s){add(lb,'text',{x:x0,y:y,'font-size':s,textLength:x1-x0,lengthAdjust:'spacingAndGlyphs'},t)}
[[357,430.500],[507,430.500],[342.300,1051.300],[387.300,1051.300],[434.300,1051.300],[481.300,1051.300],[526.300,1051.300]].forEach(([x,y])=>add(sk,'rect',{x:x,y:y,width:33.5,height:33.5,rx:2.5,'stroke-width':1.5}));
box(411.500,522.300,489.500,539.700);box(286.700,550.700,342.500,574.700);box(354.200,550.700,408.500,574.200);box(417.500,554.200,483,571.500);box(492.500,554.200,549,571.500);box(558.500,554.200,615,571.500);
box(286.700,588.200,614.800,862);box(315,870.300,588.500,888);box(341.700,910.800,562,1020);
[['https://Yogasstick.co.uk',397.500,501,366,10.200],['YOGASSTICK',407.500,485.500,435.500,13],['YOGA FOR BEGINNER',395,498,456,11],['spa',366,381,474,9],['spa',516,531,474,9],
['HOME',305.300,334.500,498,10.800],['TECHNIQUES',383.500,447,498,10.800],['TIPS',477,498,498,10.800],['CONTACT',539.500,584,498,10.800],['BOOK A CLASS',415.700,485,534,10.800],
['MONDAY',296.500,334,563,10.500],['TUESDAY',362.500,401.500,563,10.500],['WEDNESDAY',422.800,478,566.300,10.500],['THURSDAY',497,543.500,566.300,10.500],['FRIDAY',571.700,602,566.300,10.500],
['*DUE TO COVID19, CAPACITY IS LIMITED TO 9 STUDENTS',320.500,583.500,883,10.800],['WHERE TO FIND US',405,497,902,10.500],
['Facebook',338.800,379,1094,9.500],['Twitter',391,418,1094,9.500],['Instagram',430.700,471,1094,9.500],['Youtube',481.700,514,1094,9.500],['Pinerest',526.500,560,1094,9.500]].forEach(a=>label(...a));

// timetable: label, top, text width, left edge of each day column
[['09:00 - 10:00',593,43.500,[291.300,354,420.500,491.500,552.500]],['10:00 - 11:00',623,41,[291.300,356.300,422.500,490.500,551.500]],['11:00 - 12:00',653.500,41,[291.300,356.300,422.500,490.500,551.500]],
['13:00 - 14:00',683.500,42.500,[292,355,421.500,492.500,553]],['14:00 - 15:00',714,42.500,[291.300,354,421,491.500,552.500]],['15:00 - 16:00',743.500,42.500,[291,353.500,420,491,551.500]],
['16:00 - 17:00',772,42,[290,352.500,419.500,490,551]],['17:00 - 18:00',800.500,42,[289.300,352,418.500,489,550.500]],['18:00 - 19:00',829,42.500,[289,351.500,418,488.500,550]]].forEach(([t,y,w,xs])=>
 xs.forEach(x=>{box(x,y-.2,x+58.7,y+21.3,1.8);label(t,x+5,x+5+w,y+10,8.2)}));

// spread each interface label evenly over its slot
document.fonts.ready.then(()=>document.querySelectorAll('[data-w]').forEach(e=>{
 const n=e.textContent.length,d=(+e.dataset.w-e.getBoundingClientRect().width)/n;e.style.letterSpacing=d.toFixed(3)+'px'}));
</script>
</body>
</html>
